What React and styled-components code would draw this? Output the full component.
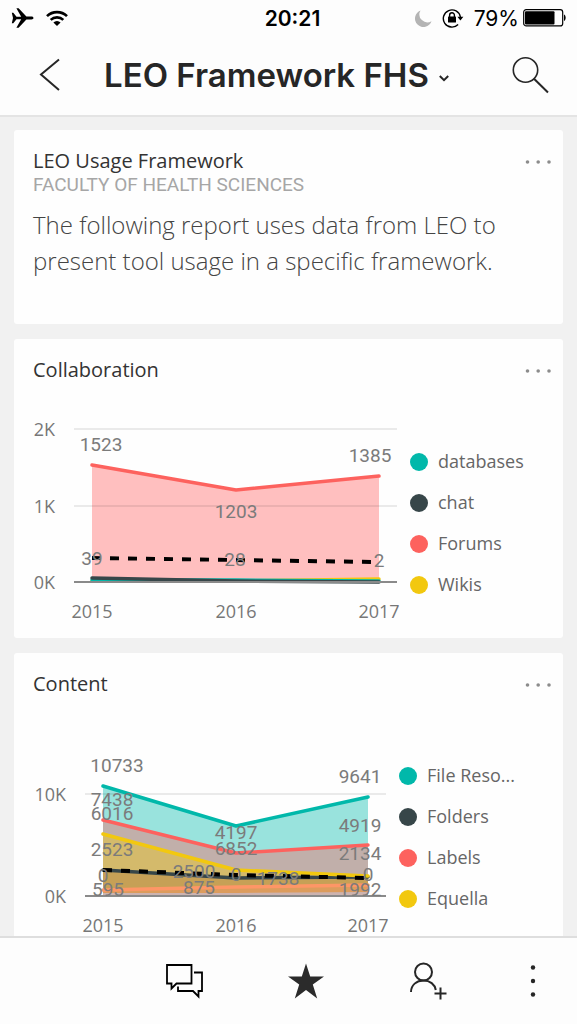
import React from 'react';
import styled, { createGlobalStyle } from 'styled-components';

const GlobalStyle = createGlobalStyle`
   * {
      box-sizing: border-box;
   }
   body {
      margin: 0;
      background-color: #f1f1f1;
      font-family: 'Open Sans', 'Noto Sans', sans-serif;
   }
   h1, h2, p, ul {
      margin: 0;
      padding: 0;
   }
   button {
      display: flex;
      align-items: center;
      justify-content: center;
      padding: 0;
      border: none;
      background: none;
      color: inherit;
      font: inherit;
      cursor: pointer;
   }
   svg {
      display: block;
   }
`;

const Screen = styled.div`
   display: flex;
   flex-direction: column;
   height: 100vh;
`;

const TopBar = styled.header`
   flex: none;
   background-color: #fdfdfd;
   border-bottom: 2px solid #e4e4e4;
   color: #262626;
   font-family: Inter, 'Liberation Sans', sans-serif;
`;

const StatusBar = styled.div`
   display: grid;
   grid-template-columns: 1fr auto 1fr;
   align-items: center;
   height: 36px;
   padding: 0 11px;
   color: #000;
   font-size: 21px;
   .time {
      margin-left: 8px;
      font-weight: 600;
   }
`;

const StatusGroup = styled.div`
   display: flex;
   align-items: center;
   gap: ${(props) => props.$gap};
   justify-content: ${(props) => (props.$end ? 'flex-end' : 'flex-start')};
`;

const TitleBar = styled.div`
   display: flex;
   align-items: center;
   height: 79px;
   padding: 0 28px 2px 39px;
   h1 {
      margin-left: 43px;
      font-size: 33px;
      font-weight: 600;
      line-height: 40px;
      white-space: nowrap;
   }
   h1 button {
      gap: 10px;
   }
   h1 svg {
      margin-top: 8px;
   }
   .search {
      margin-left: auto;
   }
`;

const Tiles = styled.main`
   flex: 1;
   min-height: 0;
   overflow-y: auto;
   scrollbar-width: none;
   display: flex;
   flex-direction: column;
   gap: 15px;
   padding: 13px 14px;
`;

const Card = styled.section`
   flex: none;
   padding: 17px 12px 13px 19px;
   border-radius: 3px;
   background-color: #fefefe;
`;

const CardHead = styled.div`
   display: flex;
   align-items: center;
   justify-content: space-between;
   color: #333;
   h2 {
      font-size: 20px;
      font-weight: 400;
      line-height: 28px;
   }
`;

const Subtitle = styled.p`
   color: #a6a6a6;
   font-family: Roboto, 'Liberation Sans', sans-serif;
   font-size: 19px;
   line-height: 20px;
   text-transform: uppercase;
`;

const Description = styled.p`
   margin: 12px 0 32px;
   color: #444;
   font-size: 24px;
   font-weight: 300;
   line-height: 36px;
`;

const ChartRow = styled.div`
   display: flex;
   align-items: flex-start;
   margin-top: 25px;
`;

const ChartSvg = styled.svg`
   flex: 1;
   min-width: 0;
   height: auto;
   .axis {
      fill: #777;
      font-size: 18px;
   }
   .value {
      fill: #7b7b7b;
      font-family: Roboto, 'Liberation Sans', sans-serif;
      font-size: 19px;
      text-anchor: middle;
   }
`;

const Legend = styled.ul`
   flex: none;
   width: ${(props) => props.$width};
   padding-top: 32px;
   list-style: none;
   color: #666;
   font-size: 18px;
   line-height: 41px;
   li {
      display: flex;
      align-items: center;
      gap: 10px;
   }
`;

const Dot = styled.span`
   width: 18px;
   height: 18px;
   border-radius: 50%;
   background-color: ${(props) => props.$color};
`;

const BottomBar = styled.nav`
   flex: none;
   display: grid;
   grid-template-columns: repeat(4, 7fr) 5fr;
   height: 88px;
   border-top: 2px solid #dedede;
   background-color: #fdfdfd;
   button:first-child {
      grid-column: 2;
   }
`;

const TEAL = '#01b8aa';
const SLATE = '#374649';
const CORAL = '#fd625e';
const YELLOW = '#f2c80f';

const collaboration = {
   title: 'Collaboration',
   width: 377,
   legendWidth: '141px',
   legend: [
      ['databases', TEAL],
      ['chat', SLATE],
      ['Forums', CORAL],
      ['Wikis', YELLOW],
   ],
   xs: [59, 203, 346],
   grid: [41, 364],
   ticks: [
      ['2K', 10],
      ['1K', 87],
      ['0K', 163],
   ],
   labelEnd: 22,
   areas: [{ ys: [46, 71, 57], fill: '#ffbfbf' }],
   lines: [
      { ys: [46, 71, 57], color: CORAL },
      { ys: [162, 162, 160], color: YELLOW },
      { ys: [161, 161, 162], color: TEAL },
      { ys: [159, 162, 163], color: SLATE },
   ],
   trend: [139, 141, 143],
   values: [
      [1523, 68, 25],
      [1203, 203, 92],
      [1385, 337, 36],
      [39, 59, 139],
      [28, 202, 140],
      [2, 346, 141],
   ],
};

const content = {
   title: 'Content',
   width: 366,
   legendWidth: '152px',
   legend: [
      ['File Reso...', TEAL],
      ['Folders', SLATE],
      ['Labels', CORAL],
      ['Equella', YELLOW],
   ],
   xs: [70, 203, 335],
   grid: [52, 353],
   ticks: [
      ['10K', 61],
      ['0K', 163],
   ],
   labelEnd: 33,
   areas: [
      { ys: [53, 93, 64], fill: '#99e3dd' },
      { ys: [87, 120, 112], fill: '#c1afaa' },
      { ys: [101, 137, 143], fill: '#d4ba6b' },
      { ys: [137, 145, 144], fill: '#c6a056' },
      { ys: [157, 154, 152], fill: '#dc9c5d' },
      { ys: [160, 160, 159], fill: '#ccb3b0' },
   ],
   lines: [
      { ys: [53, 93, 64], color: TEAL },
      { ys: [87, 120, 112], color: CORAL },
      { ys: [137, 145, 144], color: SLATE },
      { ys: [101, 137, 143], color: YELLOW },
      { ys: [157, 154, 152], color: '#fe9666' },
   ],
   trend: [137, 142, 145],
   values: [
      [10733, 84, 32],
      [7438, 79, 66],
      [6016, 79, 80],
      [2523, 79, 116],
      [0, 70, 142],
      [595, 75, 156],
      [2500, 161, 138],
      [875, 166, 154],
      [4197, 203, 99],
      [6852, 203, 115],
      [0, 203, 141],
      [1738, 245, 145],
      [9641, 327, 43],
      [4919, 327, 92],
      [2134, 327, 120],
      [0, 335, 141],
      [1992, 327, 156],
   ],
};

const BASE = 163;

const toPoints = (xs, ys) => xs.map((x, i) => `${x},${ys[i]}`).join(' ');

const MoreButton = ({ label }) => (
   <button type='button' aria-label={label}>
      <svg width='26' height='20' viewBox='0 0 26 20' fill='#8c8c8c'>
         <circle cx='2.5' cy='11' r='1.8' />
         <circle cx='13.2' cy='11' r='1.8' />
         <circle cx='24' cy='11' r='1.8' />
      </svg>
   </button>
);

const Chart = ({ data }) => {
   const { xs, grid, ticks } = data;
   const [left, , right] = xs;

   return (
      <ChartSvg
         viewBox={`0 -10 ${data.width} 216`}
         role='img'
         aria-label={`${data.title} by year`}
      >
         {data.areas.map(({ ys, fill }) => (
            <polygon
               key={fill}
               points={`${left},${BASE} ${toPoints(xs, ys)} ${right},${BASE}`}
               fill={fill}
            />
         ))}
         {ticks.map(([text, y]) => (
            <g key={text}>
               <line
                  x1={grid[0]}
                  x2={grid[1]}
                  y1={y}
                  y2={y}
                  stroke='#000'
                  strokeOpacity={y === BASE ? 0 : 0.08}
                  strokeWidth='2'
               />
               <text className='axis' x={data.labelEnd} y={y + 7} textAnchor='end'>
                  {text}
               </text>
            </g>
         ))}
         {data.lines.map(({ ys, color }) => (
            <polyline
               key={color}
               points={toPoints(xs, ys)}
               fill='none'
               stroke={color}
               strokeWidth='3.5'
               strokeLinecap='round'
               strokeLinejoin='round'
            />
         ))}
         <line
            x1={grid[0]}
            x2={grid[1]}
            y1={BASE}
            y2={BASE}
            stroke='#8a8a8a'
            strokeWidth='2'
         />
         <polyline
            points={toPoints(xs, data.trend)}
            fill='none'
            stroke='#000'
            strokeWidth='4'
            strokeDasharray='9 9'
         />
         {data.values.map(([value, x, y]) => (
            <text className='value' key={`${x}-${y}`} x={x} y={y + 7}>
               {value}
            </text>
         ))}
         {['2015', '2016', '2017'].map((year, i) => (
            <text className='axis' key={year} x={xs[i]} y='199' textAnchor='middle'>
               {year}
            </text>
         ))}
      </ChartSvg>
   );
};

const ChartCard = ({ data }) => (
   <Card>
      <CardHead>
         <h2>{data.title}</h2>
         <MoreButton label={`${data.title} options`} />
      </CardHead>
      <ChartRow>
         <Chart data={data} />
         <Legend $width={data.legendWidth}>
            {data.legend.map(([name, color]) => (
               <li key={name}>
                  <Dot $color={color} />
                  {name}
               </li>
            ))}
         </Legend>
      </ChartRow>
   </Card>
);

const PlaneIcon = () => (
   <svg width='23' height='20' viewBox='0 0 23 20'>
      <path d='M.8 4.8h1.500l3.200 3.900h4.700L5.400.3h2.200l7.800 8.300h5c1.300 0 2.100.7 2.100 1.400s-.8 1.400-2.100 1.400h-5l-7.800 8.300H5.400l4.800-8.400H5.500l-3.200 3.900H.8L2 10z' />
   </svg>
);

const WifiIcon = () => (
   <svg width='22' height='17' viewBox='0 0 22 17' fill='none' stroke='#000' strokeWidth='2.6'>
      <path d='M1 6.2a14.2 14.2 0 0 1 20 0' />
      <path d='M4.7 9.9a9 9 0 0 1 12.6 0' />
      <path d='M11 16l-3.6-3.4a5 5 0 0 1 7.2 0z' fill='#000' stroke='none' />
   </svg>
);

const MoonIcon = () => (
   <svg width='17' height='17' viewBox='0 0 17 17'>
      <path d='M5.500.5a8 8 0 0 0 11 10.800A8.500 8.500 0 1 1 5.500.5z' fill='#b4b4b4' />
   </svg>
);

const LockIcon = () => (
   <svg width='22' height='20' viewBox='0 0 22 20'>
      <path
         d='M16.100 16.500A8.600 8.600 0 1 1 18.400 9'
         fill='none'
         stroke='#000'
         strokeWidth='1.4'
      />
      <path d='M15.400 8.800h6l-3 3.600z' />
      <rect x='6' y='8.6' width='8' height='6' rx='.6' />
      <path d='M7.600 9V7.200a2.400 2.400 0 0 1 4.800 0V9' fill='none' stroke='#000' strokeWidth='1.4' />
   </svg>
);

const BatteryIcon = () => (
   <svg width='43' height='18' viewBox='0 0 43 18'>
      <rect x='.7' y='.7' width='39' height='16.2' rx='2.5' fill='none' stroke='#000' strokeWidth='1.2' />
      <rect x='2' y='2.2' width='29.5' height='13.2' rx='1' />
      <path d='M41 5.500c2.200.8 2.200 5.800 0 6.600z' />
   </svg>
);

const App = () => (
   <>
      <GlobalStyle />
      <Screen>
         <TopBar>
            <StatusBar>
               <StatusGroup $gap='12px'>
                  <PlaneIcon />
                  <WifiIcon />
               </StatusGroup>
               <span className='time'>20:21</span>
               <StatusGroup $gap='10px' $end>
                  <MoonIcon />
                  <LockIcon />
                  <StatusGroup $gap='4px'>
                     <span>79%</span>
                     <BatteryIcon />
                  </StatusGroup>
               </StatusGroup>
            </StatusBar>
            <TitleBar>
               <button type='button' aria-label='Back'>
                  <svg width='22' height='34' viewBox='0 0 22 34' fill='none' stroke='#262626' strokeWidth='2'>
                     <path d='M20 1.500L2 16.500l18 15.500' />
                  </svg>
               </button>
               <h1>
                  <button type='button'>
                     LEO Framework FHS
                     <svg width='10' height='7' viewBox='0 0 10 7' fill='none' stroke='#262626' strokeWidth='2'>
                        <path d='M.8 1L5 5.200 9.200 1' />
                     </svg>
                  </button>
               </h1>
               <button type='button' className='search' aria-label='Search'>
                  <svg width='37' height='38' viewBox='0 0 37 38' fill='none' stroke='#262626' strokeWidth='1.6'>
                     <circle cx='13.5' cy='14' r='12.2' />
                     <path d='M22 22.800L36 36.500' strokeWidth='2' />
                  </svg>
               </button>
            </TitleBar>
         </TopBar>

         <Tiles>
            <Card>
               <CardHead>
                  <h2>LEO Usage Framework</h2>
                  <MoreButton label='LEO Usage Framework options' />
               </CardHead>
               <Subtitle>Faculty of Health Sciences</Subtitle>
               <Description>
                  The following report uses data from LEO to present tool usage in a
                  specific framework.
               </Description>
            </Card>
            <ChartCard data={collaboration} />
            <ChartCard data={content} />
         </Tiles>

         <BottomBar>
            <button type='button' aria-label='Comments'>
               <svg width='38' height='36' viewBox='0 0 38 36' fill='none' stroke='#000' strokeWidth='1.8'>
                  <path d='M2 2h24.500v18.500H11.500L6.500 25.500v-5H2z' />
                  <path d='M29 9.500h8v18.500h-3.500v5.500L28 28H13v-4.500' />
               </svg>
            </button>
            <button type='button' aria-label='Favorite'>
               <svg width='36' height='36' viewBox='0 0 36 36' fill='#2b2b2b'>
                  <path d='M18 .5l4.200 13H36L24.800 21.600 29.200 35.500 18 27 6.800 35.500l4.400-13.900L0 13.500h13.800z' />
               </svg>
            </button>
            <button type='button' aria-label='Invite'>
               <svg width='38' height='38' viewBox='0 0 38 38' fill='none' stroke='#262626' strokeWidth='2'>
                  <circle cx='14.500' cy='10' r='8.5' />
                  <path d='M2 30c0-7 5.600-11.500 12.500-11.500 6.500 0 11.300 3.800 12.300 9.500' />
                  <path d='M31.500 25.500v12M25.500 31.500h12' />
               </svg>
            </button>
            <button type='button' aria-label='More'>
               <svg width='6' height='34' viewBox='0 0 6 34' fill='#262626'>
                  <circle cx='3' cy='3.5' r='2.2' />
                  <circle cx='3' cy='17' r='2.2' />
                  <circle cx='3' cy='30.5' r='2.2' />
               </svg>
            </button>
         </BottomBar>
      </Screen>
   </>
);

export default App;
